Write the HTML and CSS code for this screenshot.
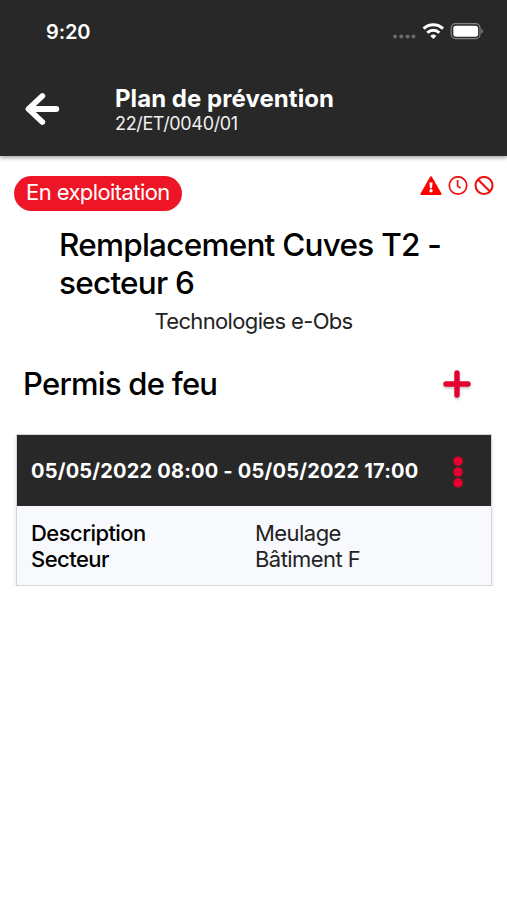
FILE: index.html
```
<!DOCTYPE html>
<html lang="fr">
<head>
    <meta charset="UTF-8">
    <meta name="viewport" content="width=device-width, initial-scale=1.0">
    <title>Plan de prévention</title>
    <link rel="stylesheet" href="styles.css">
</head>
<body>
    <header class="header">
        <div class="status-bar">
            <span class="time">9:20</span>
            <svg class="status-icons" width="92" height="20" viewBox="0 0 92 20">
                <g fill="#6b6b6b">
                    <circle cx="4" cy="14.5" r="2"/>
                    <circle cx="10.3" cy="14.5" r="2"/>
                    <circle cx="16.6" cy="14.5" r="2"/>
                    <circle cx="22.4" cy="14.5" r="2"/>
                </g>
                <g fill="none" stroke="#fff" stroke-width="3">
                    <path d="M32.6 6.6a14.2 14.2 0 0 1 19.4 0"/>
                    <path d="M36.3 10.8a8.6 8.6 0 0 1 12 0"/>
                </g>
                <path d="M42.3 17l-3-3.1a4.4 4.4 0 0 1 6 0z" fill="#fff"/>
                <rect x="60.2" y="1.7" width="28.8" height="15" rx="4.4" fill="none" stroke="#858585" stroke-width="1.2"/>
                <rect x="62.3" y="3.7" width="24.8" height="11" rx="2.6" fill="#fff"/>
                <path d="M90.4 6.8c2 .8 2 4 0 4.8z" fill="#858585"/>
            </svg>
        </div>
        <div class="nav">
            <svg class="back" width="36" height="36" viewBox="0 0 36 36">
                <path d="M18.3 5L4.5 18l13.8 13M5.5 18H32.3" fill="none" stroke="#fff" stroke-width="5.8" stroke-linecap="round" stroke-linejoin="round"/>
            </svg>
            <div>
                <h1 class="nav-title">Plan de prévention</h1>
                <div class="nav-subtitle">22/ET/0040/01</div>
            </div>
        </div>
    </header>

    <main>
        <div class="state-row">
            <span class="badge">En exploitation</span>
            <div class="alerts">
                <svg width="22" height="20" viewBox="0 0 22 20">
                    <path d="M11 1.2L20.6 18H1.4z" fill="#f00" stroke="#f00" stroke-width="2" stroke-linejoin="round"/>
                    <path d="M9.4 6.6h3.2l-.6 5.6h-2z" fill="#fff"/>
                    <circle cx="11" cy="14.8" r="1.7" fill="#fff"/>
                </svg>
                <svg width="20" height="20" viewBox="0 0 20 20" fill="none" stroke="#f01010">
                    <circle cx="10" cy="9.5" r="8.7" stroke-width="1.7"/>
                    <path d="M9.6 4v5.8l3 2.4" stroke-width="1.7"/>
                </svg>
                <svg width="20" height="20" viewBox="0 0 20 20" fill="none" stroke="#f01010" stroke-width="2.1">
                    <circle cx="10" cy="9.5" r="8.5"/>
                    <path d="M4 3.5l12 12"/>
                </svg>
            </div>
        </div>

        <h2 class="title">Remplacement Cuves T2 - secteur 6</h2>
        <div class="company">Technologies e-Obs</div>

        <div class="section">
            <h2 class="section-title">Permis de feu</h2>
            <svg class="add" width="28" height="30" viewBox="0 0 28 30">
                <path d="M14 3v22M3 14h22" stroke="#e4002f" stroke-width="5.4" stroke-linecap="round"/>
            </svg>
        </div>

        <div class="card">
            <div class="card-header">
                <span class="dates">05/05/2022 08:00 - 05/05/2022 17:00</span>
                <svg class="more" width="12" height="32" viewBox="0 0 12 32" fill="#e4002f">
                    <circle cx="6" cy="5.2" r="4.8"/>
                    <circle cx="6" cy="16" r="4.8"/>
                    <circle cx="6" cy="26.8" r="4.8"/>
                </svg>
            </div>
            <dl class="card-body">
                <dt>Description</dt>
                <dd>Meulage</dd>
                <dt>Secteur</dt>
                <dd>Bâtiment F</dd>
            </dl>
        </div>
    </main>
</body>
</html>
```
FILE: styles.css
```
* {
    box-sizing: border-box;
}
body {
    margin: 0;
    background-color: #fff;
    font-family: Inter, "Liberation Sans", sans-serif;
    color: #000;
}
h1, h2, dl, dd {
    margin: 0;
}
svg {
    display: block;
    flex-shrink: 0;
}
.header {
    height: 156px;
    background-color: #282828;
    color: #fff;
    box-shadow: 0 2px 4px rgba(0,0,0,0.35);
}
.status-bar {
    display: flex;
    justify-content: space-between;
    height: 62px;
    padding: 20px 24px 0 46px;
}
.time {
    font-size: 20px;
    font-weight: 600;
    line-height: 24px;
    letter-spacing: -0.1px;
}
.status-icons {
    margin-top: 2px;
}
.nav {
    display: flex;
    gap: 55px;
    padding: 22px 0 0 24px;
}
.back {
    margin-top: 7px;
}
.nav-title {
    padding-top: 1px;
    font-size: 24px;
    font-weight: 700;
    line-height: 28px;
    letter-spacing: 0.05px;
}
.nav-subtitle {
    font-size: 18px;
    line-height: 22px;
    letter-spacing: -0.35px;
    color: #f0f0f0;
}
.state-row {
    display: flex;
    justify-content: space-between;
    padding: 20px 13px 0 14px;
}
.badge {
    height: 35px;
    padding: 0 12px;
    border-radius: 18px;
    background-color: #ee1527;
    color: #fff;
    font-size: 22px;
    line-height: 33px;
    letter-spacing: -0.58px;
}
.alerts {
    display: flex;
    gap: 6px;
}
.title {
    padding: 15px 50px 0 59px;
    font-size: 31.5px;
    font-weight: 450;
    line-height: 38px;
    letter-spacing: -0.75px;
}
.company {
    margin-top: 5px;
    text-align: center;
    font-size: 22px;
    line-height: 28px;
    letter-spacing: -0.65px;
    color: #222;
}
.section {
    display: flex;
    justify-content: space-between;
    align-items: center;
    height: 40px;
    margin-top: 28px;
    padding: 0 36px 0 23px;
}
.section-title {
    font-size: 31px;
    font-weight: 450;
    letter-spacing: -0.75px;
}
.add {
    margin-top: 4px;
    filter: drop-shadow(0 2px 1px rgba(0,0,0,0.2));
}
.card {
    height: 152px;
    margin: 31px 15px 0 16px;
    border: 1px solid #d3d6d8;
    background-color: #f8f9fd;
    box-shadow: 0 2px 4px rgba(0,0,0,0.12);
}
.card-header {
    display: flex;
    justify-content: space-between;
    align-items: center;
    height: 71px;
    padding: 0 27px 0 14px;
    background-color: #282828;
    color: #fff;
}
.dates {
    font-size: 20px;
    font-weight: 700;
    letter-spacing: 0.2px;
    white-space: nowrap;
}
.more {
    margin-top: 3px;
}
.card-body {
    display: grid;
    grid-template-columns: 224px 1fr;
    padding: 14px 14px 0;
    font-size: 22px;
    line-height: 26px;
    letter-spacing: -0.55px;
}
.card-body dt {
    font-weight: 500;
}
.card-body dd {
    color: #222;
}
```
